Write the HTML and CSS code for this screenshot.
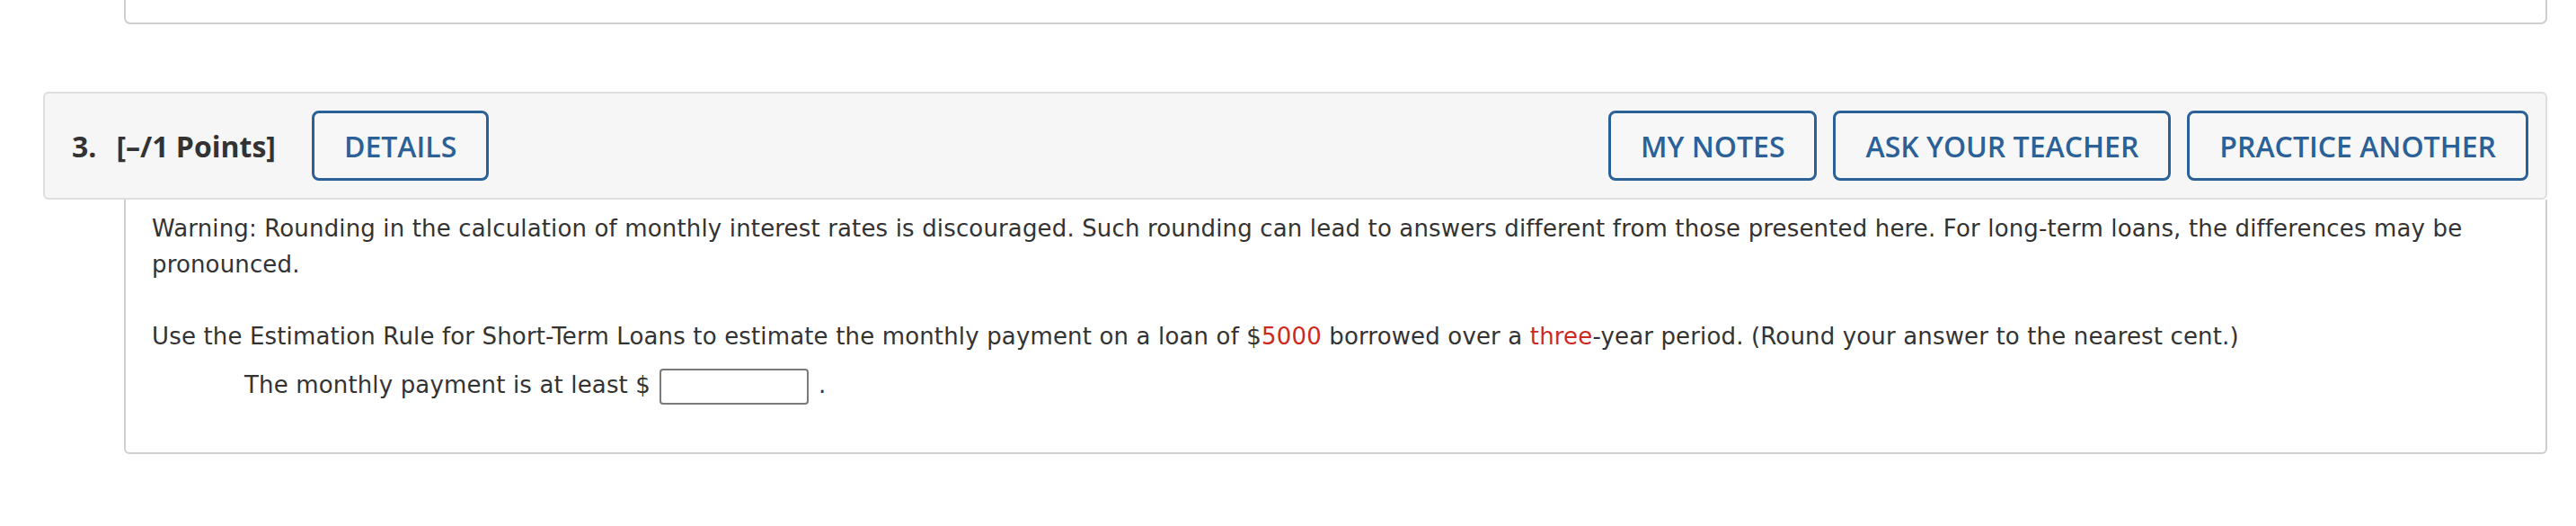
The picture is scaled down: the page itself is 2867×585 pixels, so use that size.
FILE: index.html
```html
<!DOCTYPE html>
<html lang="en">
<head>
<meta charset="utf-8">
<title>Question 3</title>
<link rel="stylesheet" href="styles.css">
</head>
<body>
<div class="page">
  <div class="prev-body"></div>

  <div class="question">
    <div class="q-header">
      <div class="q-left">
        <span class="q-num">3.</span>
        <span class="q-points">[–/1 Points]</span>
        <button class="btn btn-details" type="button">DETAILS</button>
      </div>
      <div class="q-right">
        <button class="btn" type="button">MY NOTES</button>
        <button class="btn" type="button">ASK YOUR TEACHER</button>
        <button class="btn" type="button">PRACTICE ANOTHER</button>
      </div>
    </div>
    <div class="q-body">
      <p class="q-text">Warning: Rounding in the calculation of monthly interest rates is discouraged. Such rounding can lead to answers different from those presented here. For long-term loans, the differences may be pronounced.</p>
      <p class="q-text">Use the Estimation Rule for Short-Term Loans to estimate the monthly payment on a loan of $<span class="red">5000</span> borrowed over a <span class="red">three</span>-year period. (Round your answer to the nearest cent.)</p>
      <div class="q-answer">The monthly payment is at least $ <input class="answer-input" type="text" aria-label="monthly payment"> .</div>
    </div>
  </div>
</div>
</body>
</html>
```

FILE: styles.css
```css
html, body {
  margin: 0;
  padding: 0;
  background: #ffffff;
}

.page {
  margin: 0 32px 0 48px;
}

.prev-body {
  margin-left: 90px;
  height: 27px;
  border: 2px solid #cfcfcf;
  border-top: none;
  border-radius: 0 0 7px 7px;
  box-sizing: border-box;
  background: #fff;
}

.question {
  margin-top: 75px;
}

.q-header {
  display: flex;
  align-items: center;
  justify-content: space-between;
  height: 120px;
  box-sizing: border-box;
  padding: 0 19px 0 30px;
  background: #f6f6f6;
  border: 2px solid #dedede;
  border-radius: 6px;
}

.q-left,
.q-right {
  display: flex;
  align-items: center;
}

.q-right {
  gap: 18px;
}

.q-num,
.q-points {
  font-family: "Open Sans", "Liberation Sans", sans-serif;
  font-weight: 700;
  font-size: 32px;
  color: #333333;
}

.q-num {
  margin-right: 22px;
}

.q-points {
  margin-right: 40px;
}

.btn {
  display: inline-flex;
  align-items: center;
  justify-content: center;
  height: 78px;
  box-sizing: border-box;
  padding: 0 33px;
  margin: 0;
  background: #f7f7f7;
  border: 3px solid #2b6197;
  border-radius: 8px;
  font-family: "Open Sans", "Liberation Sans", sans-serif;
  font-weight: 600;
  font-size: 32px;
  color: #2b6197;
  cursor: pointer;
}

.q-body {
  margin-left: 90px;
  padding: 12px 29px 53px 29px;
  border: 2px solid #cfcfcf;
  border-top: none;
  border-radius: 0 0 6px 6px;
  font-family: "DejaVu Sans", Verdana, sans-serif;
  font-size: 26px;
  line-height: 40px;
  letter-spacing: 0.15px;
  color: #333333;
}

.q-text {
  margin: 0 0 40px 0;
}

.q-text + .q-text {
  margin-bottom: 14px;
}

.red {
  color: #cc2a1f;
}

.q-answer {
  padding-left: 103px;
}

.answer-input {
  width: 166px;
  height: 40px;
  box-sizing: border-box;
  margin: 0 2px;
  padding: 0 6px;
  border: 2px solid #7a7a7a;
  border-radius: 4px;
  vertical-align: middle;
  font-family: "DejaVu Sans", Verdana, sans-serif;
  font-size: 24px;
}
```
